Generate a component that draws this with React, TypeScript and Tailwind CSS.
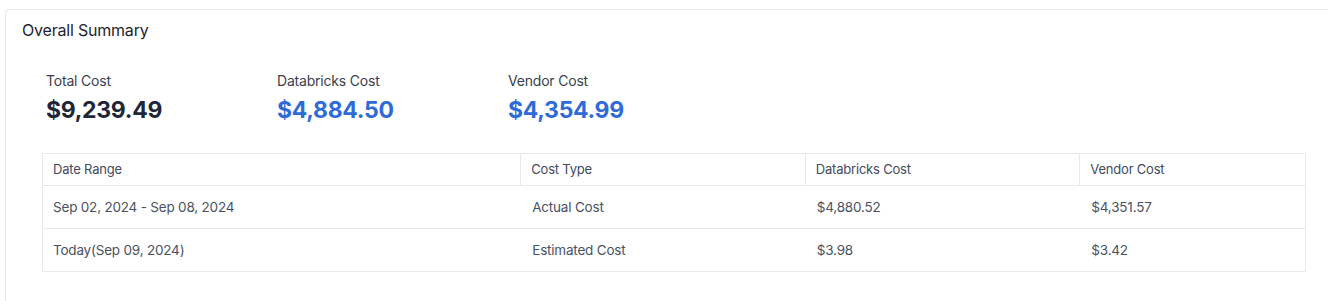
import React from "react";

const stats = [
  { label: "Total Cost", value: "$9,239.49", cls: "text-[#1e2637]" },
  { label: "Databricks Cost", value: "$4,884.50", cls: "text-[#2f6bd8]" },
  { label: "Vendor Cost", value: "$4,354.99", cls: "text-[#2f6bd8]" },
];

const rows = [
  ["Sep 02, 2024 - Sep 08, 2024", "Actual Cost", "$4,880.52", "$4,351.57"],
  ["Today(Sep 09, 2024)", "Estimated Cost", "$3.98", "$3.42"],
];

const widths = ["w-[479px]", "w-[285px]", "w-[275px]", "w-[225px]"];

export default function App() {
  return (
    <div
      className="w-[1328px] h-[301px] overflow-hidden bg-white pl-[5px] pt-[9px]"
      style={{ fontFamily: "Inter, 'Noto Sans', sans-serif" }}
    >
      <div className="w-[1360px] h-[330px] border border-[#e6e7ea] rounded-[4px] pt-2 px-4">
        <div className="text-[16px] leading-6 text-[#1f2430] tracking-[-0.2px]">Overall Summary</div>
        <div className="flex ml-6 mt-[29px]">
          {stats.map((s) => (
            <div key={s.label} className="w-[231px] flex flex-col gap-[3px]">
              <div className="text-[14px] leading-5 text-[#3a3f4b] tracking-[-0.2px]">{s.label}</div>
              <div className={`text-[23px] leading-8 font-bold tracking-[-0.3px] ${s.cls}`}>{s.value}</div>
            </div>
          ))}
        </div>
        <div className="ml-5 mt-[27px] w-[1264px] border border-[#e8e9ec]">
          <div className="flex h-[32px] border-b border-[#e8e9ec]">
            {["Date Range", "Cost Type", "Databricks Cost", "Vendor Cost"].map((h, i) => (
              <div
                key={h}
                className={`${widths[i]} flex items-center pl-[10px] text-[13px] text-[#434a5c] tracking-[-0.2px] ${i < 3 ? "border-r border-[#e8e9ec]" : ""}`}
              >
                {h}
              </div>
            ))}
          </div>
          {rows.map((r, ri) => (
            <div
              key={ri}
              className={`flex ${ri === 0 ? "h-[43px] border-b border-[#e8e9ec]" : "h-[42px]"}`}
            >
              {r.map((c, i) => (
                <div
                  key={i}
                  className={`${widths[i]} flex items-center ${i === 0 ? "pl-[10px]" : "pl-[11px]"} text-[13.5px] text-[#4a5163] tracking-[-0.2px]`}
                >
                  {c}
                </div>
              ))}
            </div>
          ))}
        </div>
      </div>
    </div>
  );
}
